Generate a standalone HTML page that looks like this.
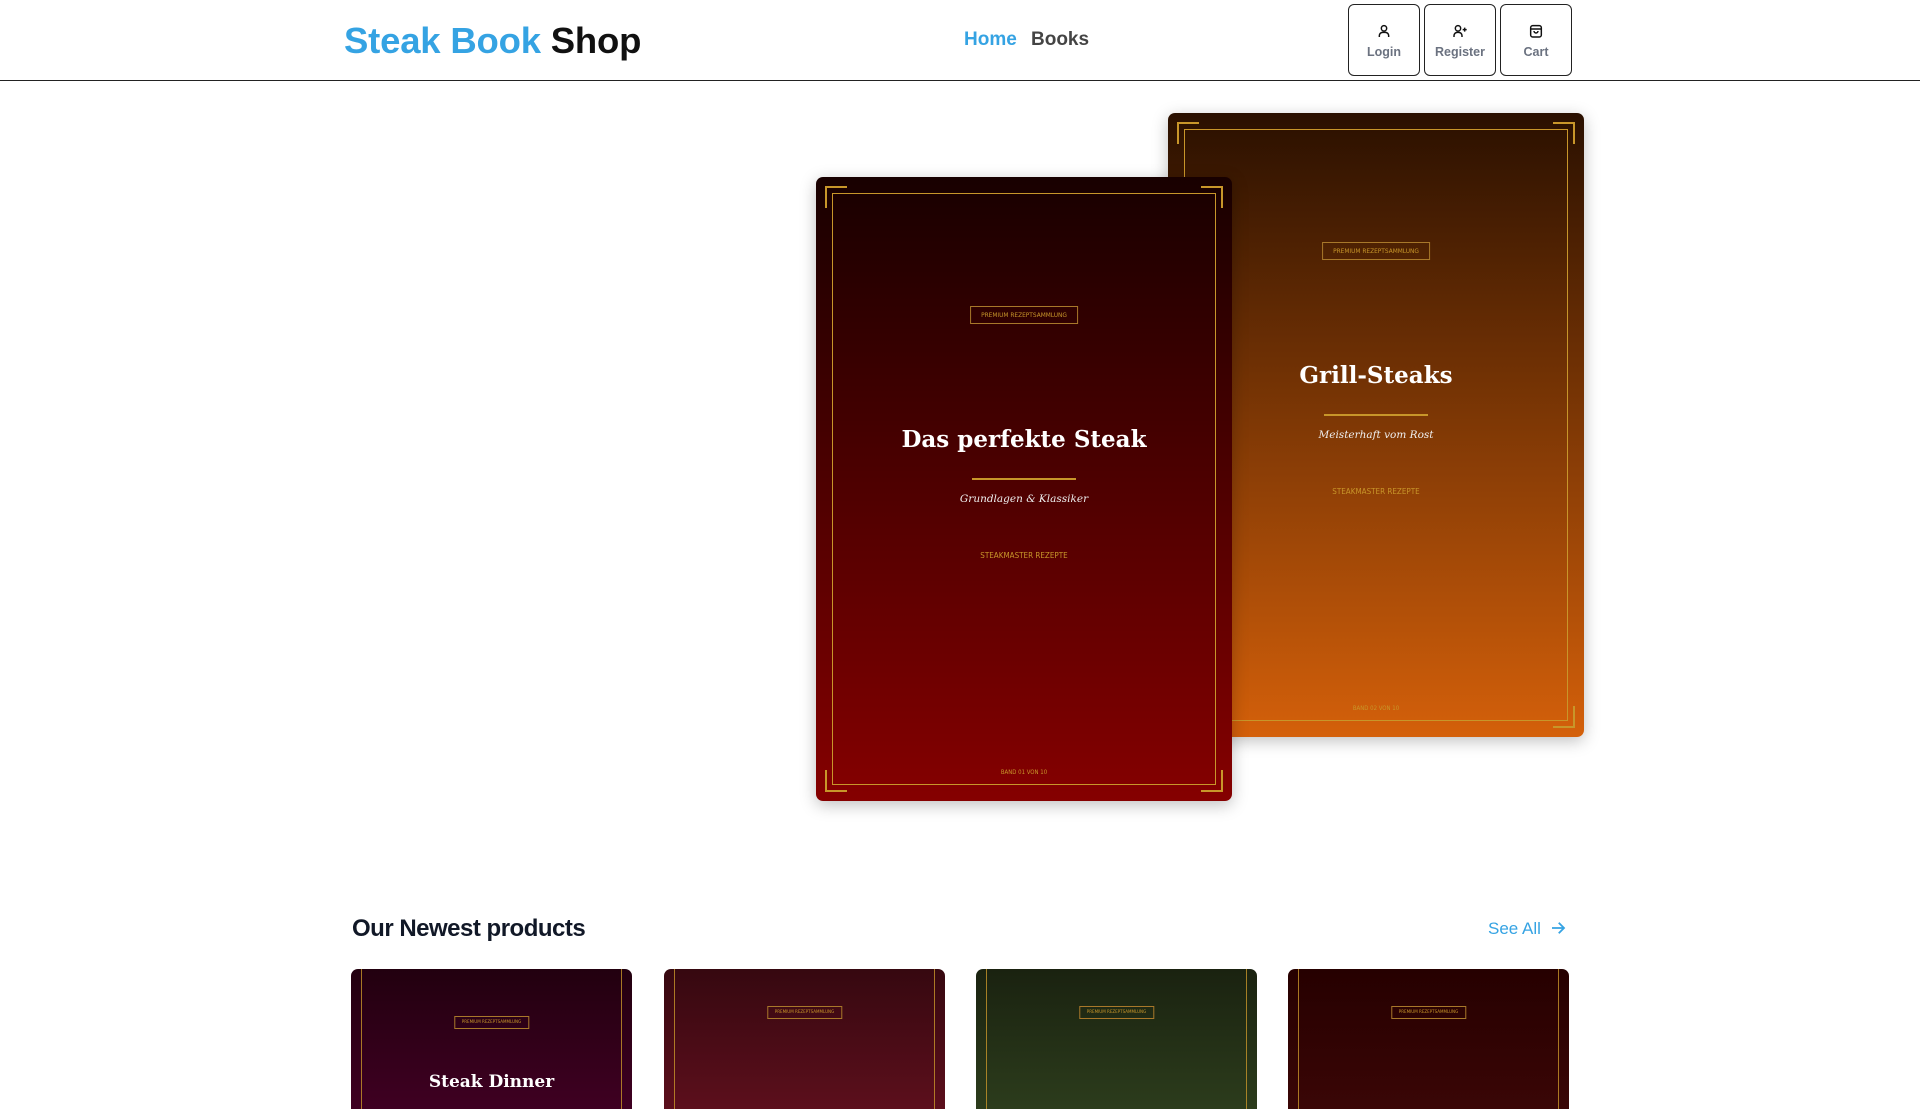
<!DOCTYPE html>
<html><head><meta charset="utf-8"><style>
*{box-sizing:border-box;margin:0;padding:0}
body{width:1920px;height:1080px;overflow:hidden;background:#fff;font-family:"Liberation Sans",sans-serif;position:relative}
.hdr{position:absolute;left:0;top:0;width:1920px;height:81px;border-bottom:1.5px solid #222}
.logo{position:absolute;left:344px;top:20px;font-size:36.5px;font-weight:bold;color:#111;letter-spacing:-0.2px}
.logo span{color:#35a3e3}
.nav{position:absolute;top:29px;font-size:19px;font-weight:bold}
.btn{position:absolute;top:4px;width:72px;height:72px;border:1.5px solid #222;border-radius:6px;text-align:center;font-size:12.5px;font-weight:bold;color:#6b7280}
.btn svg{display:block;margin:18px auto 6px}
.book{position:absolute;width:416px;height:624px;border-radius:7px;overflow:hidden;box-shadow:0 4px 16px rgba(0,0,0,.25)}
.in{position:absolute;left:16px;top:16px;right:16px;bottom:16px;border:1px solid #c8962a}
.c{position:absolute;width:22px;height:22px;border-color:#c8962a;border-style:solid;border-width:0}
.tl{left:9px;top:9px;border-top-width:2px;border-left-width:2px}
.tr{right:9px;top:9px;border-top-width:2px;border-right-width:2px}
.bl{left:9px;bottom:9px;border-bottom-width:2px;border-left-width:2px}
.br{right:9px;bottom:9px;border-bottom-width:2px;border-right-width:2px}
.lab{position:absolute;left:50%;transform:translateX(-50%);border:1px solid #a8782a;color:#c8962a;font-size:6.5px;padding:4px 10px;white-space:nowrap;font-family:"DejaVu Sans Condensed","DejaVu Sans",sans-serif}
.t{position:absolute;left:0;right:0;text-align:center;color:#fff;font-family:"DejaVu Serif",serif;font-weight:bold;font-size:23px}
.ln{position:absolute;left:50%;width:104px;margin-left:-52px;height:1.5px;background:#c8962a}
.sub{position:absolute;left:0;right:0;text-align:center;color:#eee;font-family:"DejaVu Serif",serif;font-style:italic;font-size:10.5px}
.sm{position:absolute;left:0;right:0;text-align:center;color:#c8962a;font-size:8px;font-family:"DejaVu Sans Condensed","DejaVu Sans",sans-serif}
.card{position:absolute;top:969px;width:281px;height:140px;border-radius:7px 7px 0 0;overflow:hidden}
.card .v{position:absolute;top:0;bottom:0;width:1px;background:#c8962a;opacity:.8}
.card .lab{font-size:4.5px;padding:3px 7px}
</style></head><body>
<div class="hdr">
<div class="logo"><span>Steak Book</span> Shop</div>
<div class="nav" style="left:964px;color:#35a3e3">Home</div>
<div class="nav" style="left:1031px;color:#444">Books</div>
<div class="btn" style="left:1348px"><svg width="16" height="16" viewBox="0 0 24 24" fill="none" stroke="#111" stroke-width="2.2"><circle cx="12" cy="8" r="4"/><path d="M5 21v-2a5 5 0 0 1 5-5h4a5 5 0 0 1 5 5v2"/></svg>Login</div>
<div class="btn" style="left:1424px"><svg width="16" height="16" viewBox="0 0 24 24" fill="none" stroke="#111" stroke-width="2.2"><circle cx="9" cy="8" r="4"/><path d="M3 21v-2a5 5 0 0 1 5-5h2a5 5 0 0 1 5 5v2M19 7v6M16 10h6"/></svg>Register</div>
<div class="btn" style="left:1500px"><svg width="16" height="16" viewBox="0 0 24 24" fill="none" stroke="#111" stroke-width="2.2"><rect x="4" y="4" width="16" height="17" rx="3"/><path d="M4 9h16M9 12a3 3 0 0 0 6 0"/></svg>Cart</div>
</div>

<div class="book" style="left:1168px;top:113px;background:linear-gradient(#2a1000,#d4600a)">
<div class="in"></div><div class="c tl"></div><div class="c tr"></div><div class="c bl"></div><div class="c br"></div>
<div class="lab" style="top:129px">PREMIUM REZEPTSAMMLUNG</div>
<div class="t" style="top:249px">Grill-Steaks</div>
<div class="ln" style="top:301px"></div>
<div class="sub" style="top:316px">Meisterhaft vom Rost</div>
<div class="sm" style="top:374px">STEAKMASTER REZEPTE</div>
<div class="sm" style="top:592px;font-size:6px">BAND 02 VON 10</div>
</div>

<div class="book" style="left:816px;top:177px;background:linear-gradient(#180000,#850000)">
<div class="in"></div><div class="c tl"></div><div class="c tr"></div><div class="c bl"></div><div class="c br"></div>
<div class="lab" style="top:129px">PREMIUM REZEPTSAMMLUNG</div>
<div class="t" style="top:249px">Das perfekte Steak</div>
<div class="ln" style="top:301px"></div>
<div class="sub" style="top:316px">Grundlagen &amp; Klassiker</div>
<div class="sm" style="top:374px">STEAKMASTER REZEPTE</div>
<div class="sm" style="top:592px;font-size:6px">BAND 01 VON 10</div>
</div>

<div style="position:absolute;left:352px;top:915px;font-size:24px;font-weight:bold;color:#111827;letter-spacing:-0.5px">Our Newest products</div>
<div style="position:absolute;left:1488px;top:919px;font-size:17px;color:#35a3e3">See All <svg width="20" height="18" viewBox="0 0 24 24" fill="none" stroke="#35a3e3" stroke-width="2.4" style="vertical-align:-3px;margin-left:2px"><path d="M4 12h16M13 5l7 7-7 7"/></svg></div>

<div class="card" style="left:351px;background:linear-gradient(#22000f,#3f0022)"><div class="v" style="left:10px"></div><div class="v" style="right:10px"></div><div class="lab" style="top:47px">PREMIUM REZEPTSAMMLUNG</div><div class="t" style="top:103px;font-size:17px">Steak Dinner</div></div>
<div class="card" style="left:664px;background:linear-gradient(#360810,#5c0f1c)"><div class="v" style="left:10px"></div><div class="v" style="right:10px"></div><div class="lab" style="top:37px">PREMIUM REZEPTSAMMLUNG</div></div>
<div class="card" style="left:976px;background:linear-gradient(#1a2210,#2c3c1c)"><div class="v" style="left:10px"></div><div class="v" style="right:10px"></div><div class="lab" style="top:37px">PREMIUM REZEPTSAMMLUNG</div></div>
<div class="card" style="left:1288px;background:linear-gradient(#260000,#3a0606)"><div class="v" style="left:10px"></div><div class="v" style="right:10px"></div><div class="lab" style="top:37px">PREMIUM REZEPTSAMMLUNG</div></div>
</body></html>
